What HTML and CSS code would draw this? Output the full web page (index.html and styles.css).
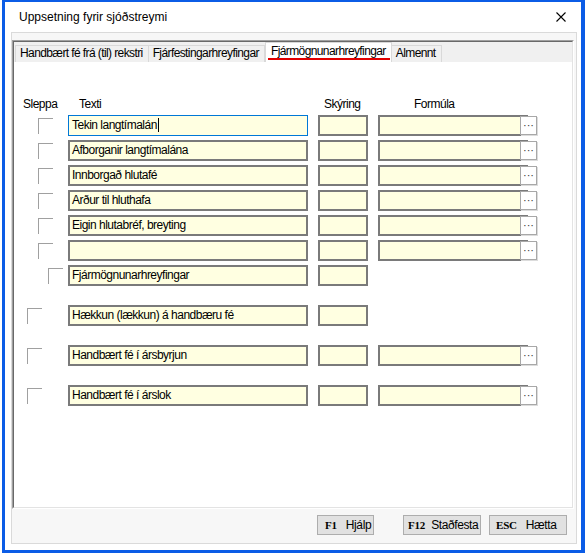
FILE: index.html
```html
<!DOCTYPE html>
<html lang="is">
<head>
  <meta charset="UTF-8">
  <title>Uppsetning fyrir sjóðstreymi</title>
  <link rel="stylesheet" href="styles.css">
</head>
<body>

  <div class="window">

    <!-- Title bar -->
    <div class="titlebar">
      <span class="title">Uppsetning fyrir sjóðstreymi</span>
      <svg class="close" width="10" height="10" viewBox="0 0 10 10">
        <path d="M0.5 0.5 L9.5 9.5 M9.5 0.5 L0.5 9.5" stroke="#000" stroke-width="1.1" fill="none"/>
      </svg>
    </div>

    <div class="frame">

      <!-- Tab control -->
      <div class="tabs">
        <div class="tabs-inner">
          <div class="tab-strip">
            <div class="tab">Handbært fé frá (til) rekstri</div>
            <div class="tab">Fjárfestingarhreyfingar</div>
            <div class="tab active">Fjármögnunarhreyfingar</div>
            <div class="tab">Almennt</div>
          </div>

          <div class="tab-page">
            <div class="head">
              <span class="h-sel">Sleppa</span>
              <span class="h-text">Texti</span>
              <span class="h-note">Skýring</span>
              <span class="h-formula">Formúla</span>
            </div>

            <div class="row">
              <div class="sel"><span class="chk"></span></div>
              <div class="text-box focused">Tekin langtímalán<span class="caret"></span></div>
              <div class="note-box"></div>
              <div class="formula"><div class="f-input"></div><div class="f-btn">···</div></div>
            </div>
            <div class="row">
              <div class="sel"><span class="chk"></span></div>
              <div class="text-box">Afborganir langtímalána</div>
              <div class="note-box"></div>
              <div class="formula"><div class="f-input"></div><div class="f-btn">···</div></div>
            </div>
            <div class="row">
              <div class="sel"><span class="chk"></span></div>
              <div class="text-box">Innborgað hlutafé</div>
              <div class="note-box"></div>
              <div class="formula"><div class="f-input"></div><div class="f-btn">···</div></div>
            </div>
            <div class="row">
              <div class="sel"><span class="chk"></span></div>
              <div class="text-box">Arður til hluthafa</div>
              <div class="note-box"></div>
              <div class="formula"><div class="f-input"></div><div class="f-btn">···</div></div>
            </div>
            <div class="row">
              <div class="sel"><span class="chk"></span></div>
              <div class="text-box">Eigin hlutabréf, breyting</div>
              <div class="note-box"></div>
              <div class="formula"><div class="f-input"></div><div class="f-btn">···</div></div>
            </div>
            <div class="row">
              <div class="sel"><span class="chk"></span></div>
              <div class="text-box"></div>
              <div class="note-box"></div>
              <div class="formula"><div class="f-input"></div><div class="f-btn">···</div></div>
            </div>
            <div class="row sub">
              <div class="sel"><span class="chk"></span></div>
              <div class="text-box">Fjármögnunarhreyfingar</div>
              <div class="note-box"></div>
            </div>

            <div class="row total">
              <div class="sel"><span class="chk"></span></div>
              <div class="text-box">Hækkun (lækkun) á handbæru fé</div>
              <div class="note-box"></div>
            </div>
            <div class="row total">
              <div class="sel"><span class="chk"></span></div>
              <div class="text-box">Handbært fé í ársbyrjun</div>
              <div class="note-box"></div>
              <div class="formula"><div class="f-input"></div><div class="f-btn">···</div></div>
            </div>
            <div class="row total">
              <div class="sel"><span class="chk"></span></div>
              <div class="text-box">Handbært fé í árslok</div>
              <div class="note-box"></div>
              <div class="formula"><div class="f-input"></div><div class="f-btn">···</div></div>
            </div>
          </div>
        </div>
      </div>

      <!-- Bottom buttons -->
      <div class="footer">
        <div class="btn btn-help"><span class="key">F1</span>Hjálp</div>
        <div class="btn btn-ok"><span class="key">F12</span>Staðfesta</div>
        <div class="btn btn-cancel"><span class="key">ESC</span>Hætta</div>
      </div>

    </div>
  </div>

</body>
</html>
```

FILE: styles.css
```css
/* General Reset */
* {
  box-sizing: border-box;
}

body {
  margin: 0;
  background: #fff;
  font-family: "Liberation Sans", Arial, sans-serif;
  font-size: 12px;
  color: #000;
}

/* Window frame */
.window {
  margin-left: 2px;
  width: 583px;
  height: 553px;
  border: 3px solid #0b5ce6;
  border-top-width: 2px;
  border-right-width: 4px;
  background: #fff;
  display: flex;
  flex-direction: column;
}

.titlebar {
  height: 30px;
  display: flex;
  align-items: center;
  justify-content: space-between;
  padding: 0 15px 0 14px;
}

.title {
  font-size: 12px;
}

.frame {
  flex: 1;
  margin: 0 4px 6px 6px;
  border: 1px solid #dadada;
  background: #f7f7f7;
  padding: 7px 2px 0 0;
  display: flex;
  flex-direction: column;
}

/* Tab control */
.tabs {
  flex: 1;
  display: flex;
  border-top: 1px solid #a0a0a0;
  border-left: 1px solid #a0a0a0;
  border-right: 1px solid #fff;
  border-bottom: 1px solid #fff;
}

.tabs-inner {
  flex: 1;
  display: flex;
  flex-direction: column;
  border-top: 1px solid #696969;
  border-left: 1px solid #696969;
  border-right: 1px solid #e3e3e3;
  border-bottom: 1px solid #e3e3e3;
}

.tab-strip {
  height: 20px;
  background: #f0f0f0;
  display: flex;
  align-items: flex-end;
  padding-left: 1px;
}

.tab {
  height: 17px;
  line-height: 15px;
  padding: 0 5px 0 4px;
  border: 1px solid #d9d9d9;
  border-bottom: none;
  background: #f0f0f0;
  letter-spacing: -0.6px;
  white-space: nowrap;
}

.tab + .tab {
  border-left: none;
}

.tab.active {
  position: relative;
  height: 20px;
  line-height: 17px;
  padding: 0 5px;
  background: #fff;
  border-left: 1px solid #d9d9d9;
}

.tab.active::after {
  content: "";
  position: absolute;
  left: 2px;
  right: 1px;
  bottom: 2px;
  height: 2px;
  background: #e10000;
}

.tab.active + .tab {
  border-left: none;
}

.tab-page {
  flex: 1;
  background: #fff;
  padding-top: 35px;
}

/* Column headers */
.head {
  display: flex;
  height: 14px;
  line-height: 14px;
  padding-left: 9px;
  margin-bottom: 3px;
  letter-spacing: -0.5px;
}

.h-sel { width: 56px; }
.h-text { width: 245px; }
.h-note { width: 90px; }

/* Rows */
.row {
  display: flex;
  align-items: center;
  height: 21px;
  margin-top: 4px;
}

.row.total {
  margin-top: 19px;
}

.sel {
  width: 54px;
  display: flex;
}

.chk {
  width: 15px;
  height: 16px;
  margin-left: 24px;
  border-top: 1px solid #a0a0a0;
  border-left: 1px solid #a0a0a0;
  background: #fff;
}

.row.sub .chk { margin-left: 34px; }
.row.total .chk { margin-left: 13px; }

.text-box,
.note-box,
.f-input {
  height: 21px;
  border: 2px solid #7a7a7a;
  background: #ffffe1;
}

.text-box {
  width: 240px;
  margin-right: 10px;
  padding: 0 2px;
  line-height: 17px;
  letter-spacing: -0.5px;
  white-space: nowrap;
}

.text-box.focused {
  border: 1px solid #0078d7;
  padding: 0 3px;
  line-height: 19px;
}

.caret {
  display: inline-block;
  width: 1px;
  height: 14px;
  background: #000;
  vertical-align: -3px;
  margin-left: 1px;
}

.note-box {
  width: 50px;
  margin-right: 10px;
}

.formula {
  display: flex;
  align-items: flex-start;
  height: 21px;
}

.f-input {
  width: 150px;
}

.f-btn {
  width: 17px;
  height: 19px;
  margin-left: -8px;
  margin-top: 1px;
  border: 1px solid #a8a8a8;
  background: #fff;
  box-shadow: 1px 1px 0 #dcdcdc;
  text-align: center;
  font-size: 11px;
  line-height: 16px;
  color: #333;
}

/* Footer buttons */
.footer {
  height: 34px;
  display: flex;
  justify-content: flex-end;
  align-items: flex-start;
  padding: 6px 7px 0 0;
}

.btn {
  height: 20px;
  border: 1px solid #adadad;
  background: #e1e1e1;
  display: flex;
  align-items: center;
  padding-left: 7px;
  letter-spacing: -0.4px;
  white-space: nowrap;
}

.btn-help { width: 57px; }
.btn-ok { width: 78px; margin-left: 29px; padding-left: 4px; }
.btn-cancel { width: 78px; margin-left: 8px; padding-left: 6px; }

.key {
  font-family: "Liberation Serif", "Times New Roman", serif;
  font-weight: bold;
  font-size: 11px;
  letter-spacing: -0.2px;
  margin-right: 9px;
}

.btn-ok .key {
  margin-right: 6px;
}
```
